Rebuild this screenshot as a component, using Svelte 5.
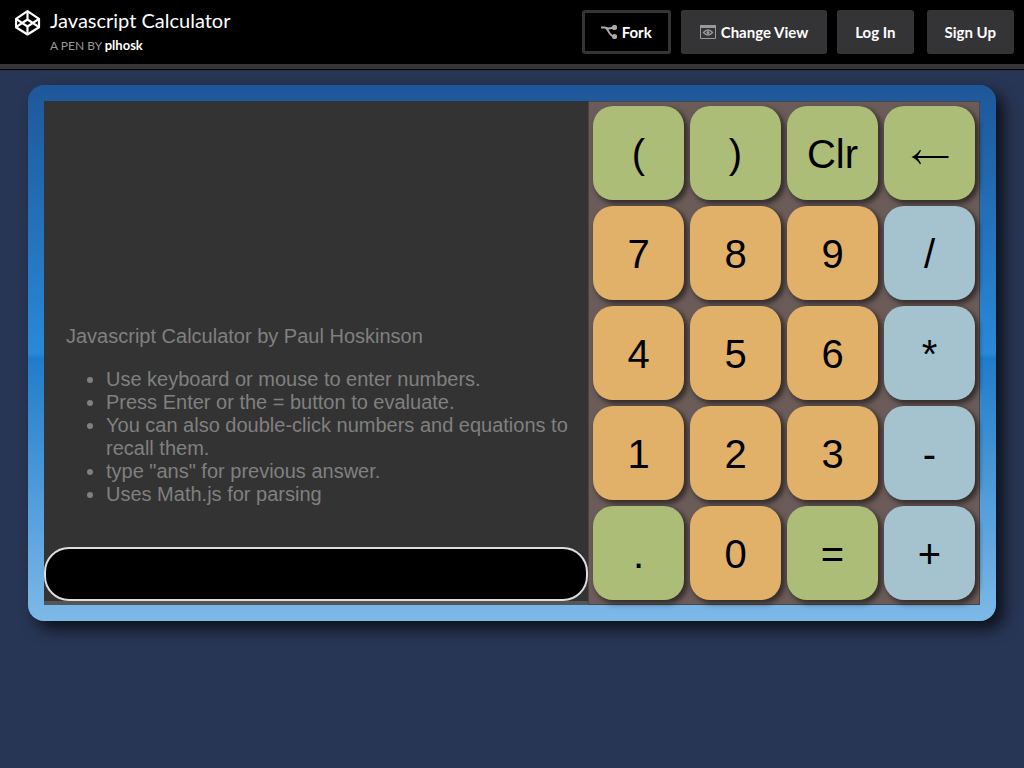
<script>
  const keys = [
    ['(', 'green'], [')', 'green'], ['Clr', 'green'], ['←', 'green'],
    ['7', 'orange'], ['8', 'orange'], ['9', 'orange'], ['/', 'blue'],
    ['4', 'orange'], ['5', 'orange'], ['6', 'orange'], ['*', 'blue'],
    ['1', 'orange'], ['2', 'orange'], ['3', 'orange'], ['-', 'blue'],
    ['.', 'green'], ['0', 'orange'], ['=', 'green'], ['+', 'blue']
  ];
  let entry = $state('');

  function press(key) {
    if (key === 'Clr') entry = '';
    else if (key === '←') entry = entry.slice(0, -1);
    else if (key !== '=') entry += key;
  }
</script>

<div class="page">
  <header>
    <a class="logo" href="#home" aria-label="Home">
      <svg width="26" height="26" viewBox="0 0 26 26" fill="none" stroke="#fff" stroke-width="2.2" stroke-linejoin="round">
        <path d="M12.500 1.200 24 8.800v8.400L12.500 24.500 1 17.200V8.800z" />
        <path d="M1 8.800l11.500 7.700L24 8.800M1 17.200l11.500-7.700L24 17.200M12.500 1.200v8.300M12.500 16.500v8" />
      </svg>
    </a>
    <div class="title">
      <h1>Javascript Calculator</h1>
      <p>A PEN BY <a href="#author">plhosk</a></p>
    </div>
    <nav>
      <button class="fork">
        <svg width="16" height="14" viewBox="0 0 16 14" fill="none" stroke="#aaa" stroke-width="2">
          <path d="M0 2.500h3.500C7.500 2.500 7.500 11 13 11.500M5 2.500C7.500 4.500 9.500 3 13 2.500" />
          <circle cx="13.500" cy="2.500" r="1.600" fill="#aaa" />
          <circle cx="13.500" cy="11.500" r="1.600" fill="#aaa" />
        </svg>
        Fork
      </button>
      <button class="view">
        <svg width="16" height="14" viewBox="0 0 16 14" fill="none" stroke="#999">
          <path d="M.5.500h15v13H.5z" />
          <path d="M0 1.500h16" stroke-width="3" />
          <path d="M3.500 7.500q4.500-5 9 0q-4.500 5-9 0z" stroke-width="1.400" />
          <circle cx="8" cy="7.500" r="1.500" fill="#999" stroke="none" />
        </svg>
        Change View
      </button>
      <button>Log In</button>
      <button class="signup">Sign Up</button>
    </nav>
  </header>

  <main>
    <section class="screen">
      <div class="display">
        <p>Javascript Calculator by Paul Hoskinson</p>
        <ul>
          <li>Use keyboard or mouse to enter numbers.</li>
          <li>Press Enter or the = button to evaluate.</li>
          <li>You can also double-click numbers and equations to recall them.</li>
          <li>type "ans" for previous answer.</li>
          <li>Uses Math.js for parsing</li>
        </ul>
      </div>
      <input type="text" aria-label="Expression" bind:value={entry} />
    </section>
    <section class="keypad">
      {#each keys as [key, color]}
        <button class={color} aria-label={key === '←' ? 'Backspace' : key} onclick={() => press(key)}>
          {#if key === '←'}
            <svg width="38" height="16" viewBox="0 0 38 16">
              <path d="M3 8h34.500" stroke="#000" stroke-width="2" />
              <path d="M.5 8C4 6.500 7 4 9 .7l1 .8C8.800 4 7.500 6 5.500 8c2 2 3.300 4 4.500 6.500l-1 .8C7 12 4 9.500.5 8z" />
            </svg>
          {:else}
            {key}
          {/if}
        </button>
      {/each}
    </section>
  </main>
</div>

<style>
  :global(body) {
    background: #283655;
  }
  .page {
    min-height: 100vh;
    background: #283655;
  }
  header {
    display: flex;
    align-items: flex-start;
    padding: 10px 10px 10px 15px;
    height: 44px;
    background: #000;
    border-bottom: 5px solid #343436;
    box-shadow: 0 1px 1px #000;
    font-family: Lato, sans-serif;
    color: #fff;
  }
  .logo {
    height: 26px;
  }
  .title {
    flex: 1;
    margin-left: 9px;
  }
  h1 {
    margin: 0;
    font-size: 20px;
    font-weight: 400;
    line-height: 20px;
  }
  .title p {
    margin: 6px 0 0;
    font-size: 12px;
    line-height: 18px;
    color: #999;
  }
  .title a {
    font-size: 13px;
    font-weight: 700;
    color: #fff;
    text-decoration: none;
  }
  nav {
    display: flex;
    gap: 10px;
  }
  nav button {
    display: flex;
    align-items: center;
    justify-content: center;
    gap: 5px;
    height: 44px;
    padding: 0 18px;
    border: 0;
    border-radius: 3px;
    background: #343436;
    color: #fff;
    font: 700 15px Lato, sans-serif;
    white-space: nowrap;
  }
  nav .fork {
    padding: 0 16px;
    border: 3px solid #343436;
    background: #000;
  }
  nav .view {
    padding: 0 19px;
  }
  nav .signup {
    margin-left: 3px;
  }
  main {
    display: flex;
    margin: 16px 28px;
    padding: 16px;
    border-radius: 16px;
    background: linear-gradient(#1e5799 0%, #2989d8 50%, #207cca 51%, #7db9e8 100%);
    box-shadow: 8px 8px 15px rgba(0, 0, 0, 0.7);
    font-family: "Liberation Sans", Arial, sans-serif;
  }
  .screen {
    flex: 1;
    display: flex;
    flex-direction: column;
    min-width: 0;
    background: #333;
    border-bottom: 4px solid #555;
  }
  .display {
    flex: 1;
    display: flex;
    flex-direction: column;
    justify-content: flex-end;
    padding: 0 16px 0 22px;
    font-size: 20px;
    line-height: 23px;
    color: #808080;
  }
  .display p {
    margin: 0;
  }
  ul {
    margin: 20px 0 41px;
    padding-left: 40px;
  }
  input {
    box-sizing: border-box;
    width: 100%;
    height: 54px;
    padding: 0 20px;
    border: 2px solid #ddd;
    border-radius: 25px;
    outline: 0;
    background: #000;
    color: #ddd;
    font: 24px "Liberation Sans", Arial, sans-serif;
  }
  .keypad {
    display: grid;
    grid-template-columns: repeat(4, 91px);
    grid-auto-rows: 94px;
    gap: 6px;
    padding: 4px;
    border: 1px solid #4a4442;
    background: #6b5c59;
  }
  .keypad button {
    padding: 2px 0 0;
    border: 0;
    border-radius: 20px;
    box-shadow: 3px 3px 5px 1px rgba(0, 0, 0, 0.5);
    color: #000;
    font: 40px "Liberation Sans", Arial, sans-serif;
  }
  .keypad svg {
    display: block;
    margin: 6px auto 0;
  }
  .green {
    background: #acbd78;
  }
  .orange {
    background: #e1b16a;
  }
  .blue {
    background: #a5c3cf;
  }
</style>
